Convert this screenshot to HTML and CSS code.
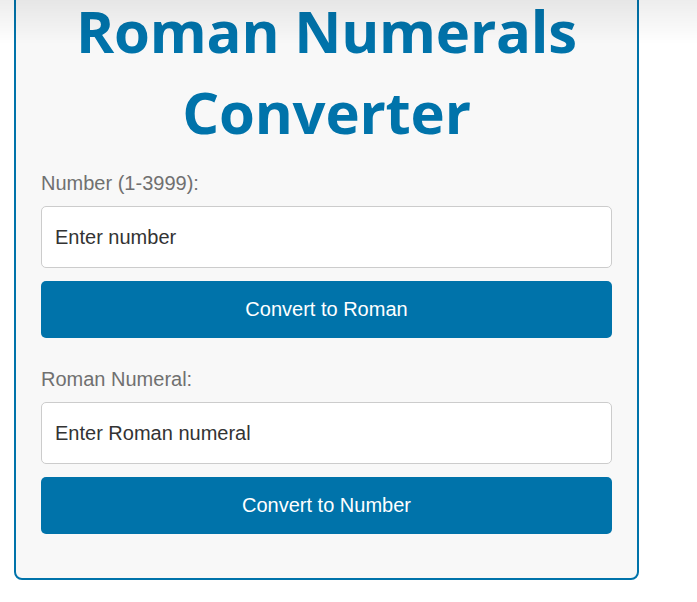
FILE: index.html
```html
<!DOCTYPE html>
<html lang="en">
<head>
<meta charset="utf-8">
<title>Roman Numerals Converter</title>
<link rel="stylesheet" href="styles.css">
</head>
<body>
<div class="top-shade"></div>
<main class="card">
  <h1 class="title">Roman Numerals Converter</h1>
  <div class="group">
    <label class="label" for="num">Number (1-3999):</label>
    <input class="field" id="num" type="text" placeholder="Enter number">
    <button class="btn" type="button">Convert to Roman</button>
  </div>
  <div class="group">
    <label class="label" for="rom">Roman Numeral:</label>
    <input class="field" id="rom" type="text" placeholder="Enter Roman numeral">
    <button class="btn" type="button">Convert to Number</button>
  </div>
</main>
</body>
</html>
```
FILE: styles.css
```css
html, body {
  margin: 0;
  padding: 0;
  background: #ffffff;
}
body {
  font-family: "Liberation Sans", Arial, sans-serif;
  overflow: hidden;
}
.top-shade {
  position: fixed;
  left: 0;
  top: 0;
  right: 0;
  height: 44px;
  background: linear-gradient(to bottom, rgba(0,0,0,0.07), rgba(0,0,0,0));
  pointer-events: none;
  z-index: 5;
}
.card {
  box-sizing: border-box;
  width: 625px;
  margin: -37px 0 0 14px;
  padding: 25px 25px 24px;
  background: #f8f8f8;
  border: 2px solid #0073aa;
  border-radius: 8px;
}
.title {
  margin: 0 0 20px;
  font-family: "Open Sans", sans-serif;
  font-weight: 700;
  font-size: 58px;
  line-height: 81px;
  letter-spacing: -0.2px;
  color: #0073aa;
  text-align: center;
}
.group {
  display: flex;
  flex-direction: column;
  margin-bottom: 30px;
}
.group:last-child {
  margin-bottom: 20px;
}
.label {
  font-size: 20px;
  line-height: 23px;
  color: #707070;
  margin-bottom: 11px;
}
.field {
  box-sizing: border-box;
  height: 62px;
  padding: 0 13px;
  font-family: "Liberation Sans", Arial, sans-serif;
  font-size: 20px;
  color: #333;
  background: #fff;
  border: 1px solid #cccccc;
  border-radius: 5px;
  margin-bottom: 13px;
  outline: none;
}
.field::placeholder {
  color: #333;
  opacity: 1;
}
.btn {
  height: 57px;
  font-family: "Liberation Sans", Arial, sans-serif;
  font-size: 20px;
  color: #fff;
  background: #0073aa;
  border: none;
  border-radius: 5px;
  cursor: pointer;
}
```
